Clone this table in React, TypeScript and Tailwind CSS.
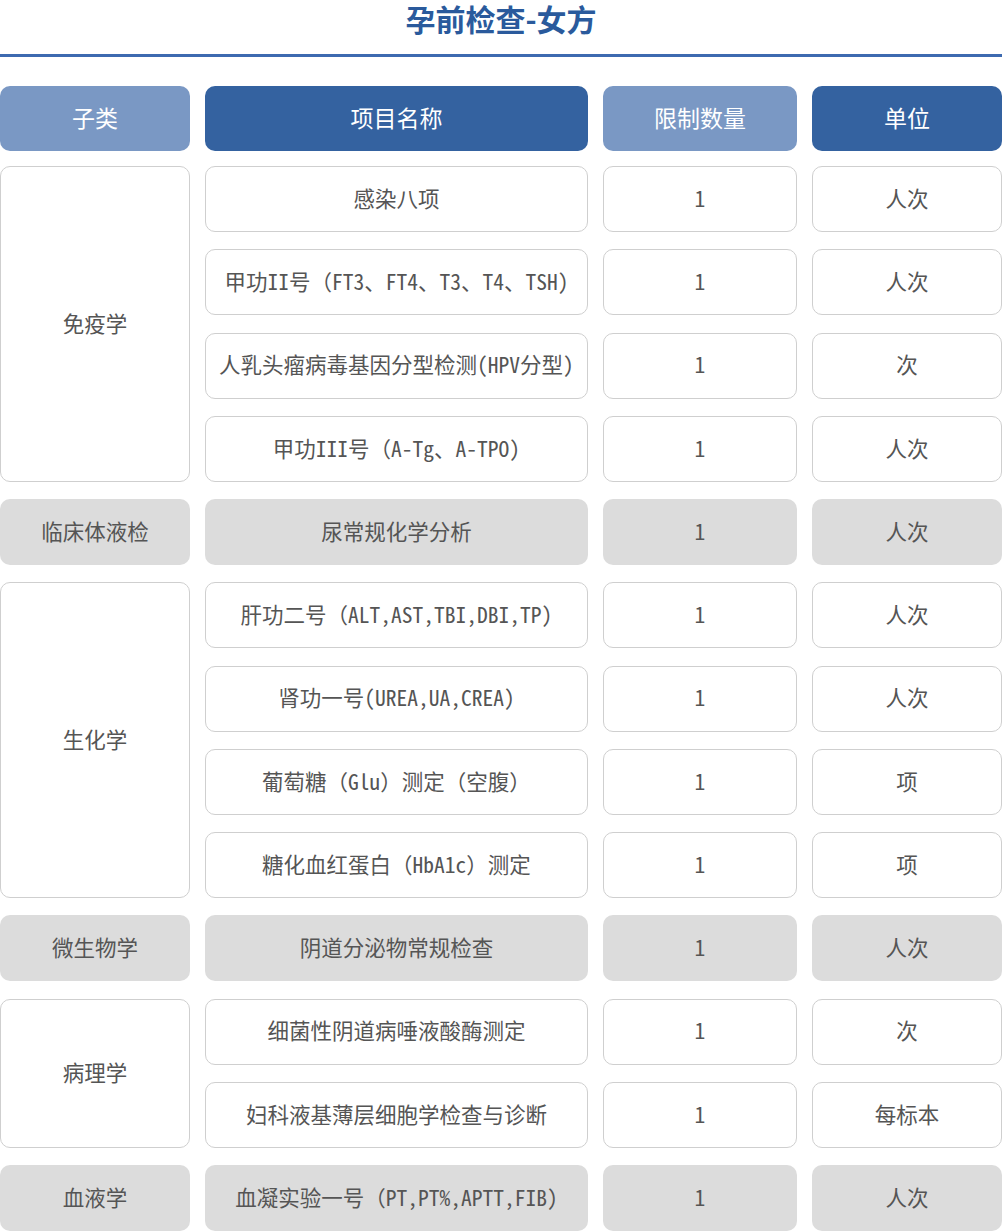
import React from "react";

type Item = { name: string; qty: string; unit: string };
type Group = { category: string; items: Item[] };

const groups: Group[] = [
  {
    category: "免疫学",
    items: [
      { name: "感染八项", qty: "1", unit: "人次" },
      { name: "甲功II号（FT3、FT4、T3、T4、TSH)", qty: "1", unit: "人次" },
      { name: "人乳头瘤病毒基因分型检测(HPV分型)", qty: "1", unit: "次" },
      { name: "甲功III号（A-Tg、A-TPO)", qty: "1", unit: "人次" },
    ],
  },
  {
    category: "临床体液检",
    items: [{ name: "尿常规化学分析", qty: "1", unit: "人次" }],
  },
  {
    category: "生化学",
    items: [
      { name: "肝功二号（ALT,AST,TBI,DBI,TP)", qty: "1", unit: "人次" },
      { name: "肾功一号(UREA,UA,CREA)", qty: "1", unit: "人次" },
      { name: "葡萄糖（Glu）测定（空腹）", qty: "1", unit: "项" },
      { name: "糖化血红蛋白（HbA1c）测定", qty: "1", unit: "项" },
    ],
  },
  {
    category: "微生物学",
    items: [{ name: "阴道分泌物常规检查", qty: "1", unit: "人次" }],
  },
  {
    category: "病理学",
    items: [
      { name: "细菌性阴道病唾液酸酶测定", qty: "1", unit: "次" },
      { name: "妇科液基薄层细胞学检查与诊断", qty: "1", unit: "每标本" },
    ],
  },
  {
    category: "血液学",
    items: [{ name: "血凝实验一号（PT,PT%,APTT,FIB)", qty: "1", unit: "人次" }],
  },
];

const headers = [
  { label: "子类", dark: false },
  { label: "项目名称", dark: true },
  { label: "限制数量", dark: false },
  { label: "单位", dark: true },
];

// single-row groups get the grey fill, multi-row groups the white outlined cells
function Cell({
  children,
  grey,
  span,
  className = "",
}: {
  children: React.ReactNode;
  grey: boolean;
  span?: number;
  className?: string;
}) {
  return (
    <div
      className={
        "flex items-center justify-center whitespace-nowrap rounded-[10px] px-2 pb-[2px] text-center text-[21.5px] text-[#555555] " +
        (grey ? "bg-[#dcdcdc] " : "border border-[#cfcfcf] bg-white ") +
        className
      }
      style={span ? { gridRow: `span ${span} / span ${span}` } : undefined}
    >
      {children}
    </div>
  );
}

export default function App() {
  const font = {
    fontFamily:
      '"Noto Sans Mono CJK SC", "Noto Sans CJK SC", "Noto Sans", sans-serif',
  };
  return (
    <div className="w-[1002px] bg-white" style={font}>
      <div className="flex h-[57px] flex-col items-center border-b-[3px] border-[#3d6ab0]">
        <h1
          className="text-[30px] font-bold leading-[36px] text-[#2a5a9c]"
          style={{ fontFamily: '"Noto Sans CJK SC", sans-serif' }}
        >
          孕前检查-女方
        </h1>
      </div>

      <div className="mt-[29px] grid grid-cols-[190px_383px_194px_190px] gap-x-[15px]">
        {headers.map((h) => (
          <div
            key={h.label}
            className={
              "flex h-[65px] items-center justify-center rounded-[10px] pb-[2px] text-[23px] text-white " +
              (h.dark ? "bg-[#3462a0]" : "bg-[#7a98c4]")
            }
            style={{ fontFamily: '"Noto Sans CJK SC", sans-serif' }}
          >
            {h.label}
          </div>
        ))}
      </div>

      <div className="mt-[15px] grid auto-rows-[66px] grid-cols-[190px_383px_194px_190px] gap-x-[15px] gap-y-[17.25px]">
        {groups.map((g) => {
          const grey = g.items.length === 1;
          return (
            <React.Fragment key={g.category}>
              {g.items.map((it, i) => (
                <React.Fragment key={it.name}>
                  {i === 0 && (
                    <Cell grey={grey} span={g.items.length} className="col-start-1">
                      {g.category}
                    </Cell>
                  )}
                  <Cell grey={grey} className="col-start-2">
                    {it.name}
                  </Cell>
                  <Cell grey={grey}>{it.qty}</Cell>
                  <Cell grey={grey}>{it.unit}</Cell>
                </React.Fragment>
              ))}
            </React.Fragment>
          );
        })}
      </div>
    </div>
  );
}
